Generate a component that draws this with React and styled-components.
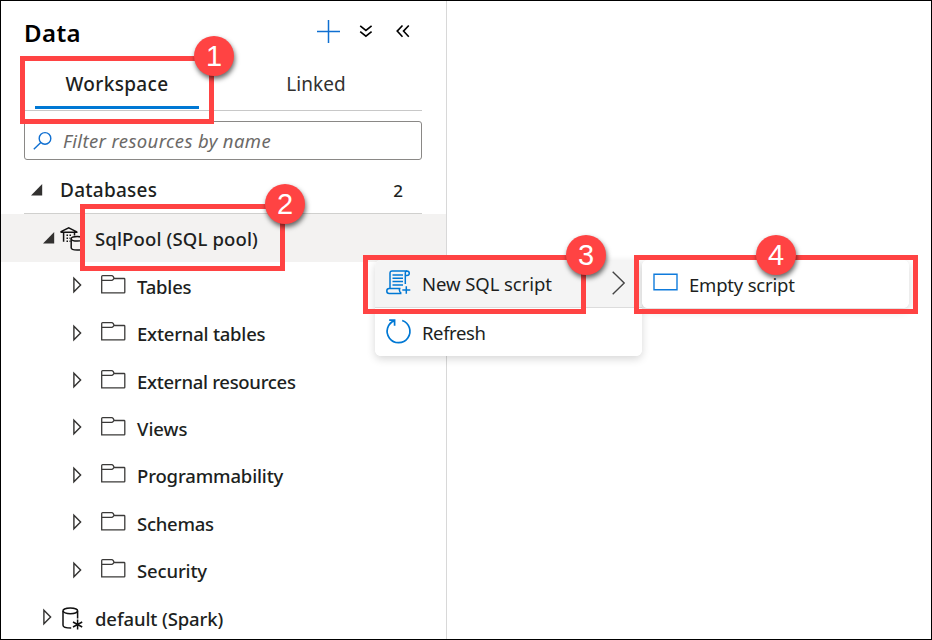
import React from "react";
import styled, { createGlobalStyle } from "styled-components";

const GlobalStyle = createGlobalStyle`
  *, *::before, *::after { box-sizing: border-box; }
  body { margin: 0; font-family: "Noto Sans", "Open Sans", sans-serif; color: #201f1e; background: #fff; }
  svg { display: block; overflow: visible; }
`;

const Window = styled.div`
  position: relative;
  width: 932px;
  height: 640px;
  display: flex;
  border: 1px solid #000;
  background: #fff;
  overflow: hidden;
  white-space: nowrap;
`;

const Panel = styled.aside`
  width: 446px;
  flex: none;
  border-right: 1px solid #d8d8d8;
`;

const Header = styled.header`
  height: 62px;
  display: flex;
  align-items: center;
  padding: 0 35px 0 23px;
`;

const Title = styled.h1`
  margin: 2px auto 0 0;
  font-size: 24px;
  line-height: 32px;
  font-weight: 600;
  letter-spacing: 0.4px;
  color: #000;
`;

const HeaderIcons = styled.div`
  display: flex;
  align-items: center;
  margin: -2px 0 0;
  padding-right: 1px;
`;

const IconButton = styled.span`
  margin-left: ${(p) => p.$ml || 0}px;
`;

const Tabs = styled.nav`
  height: 48px;
  margin: 0 24px 0 23px;
  display: flex;
  border-bottom: 1px solid #c8c8c8;
`;

const Tab = styled.div`
  height: 46px;
  width: 164px;
  margin-left: ${(p) => p.$ml}px;
  padding-top: 8px;
  text-align: center;
  font-size: 19px;
  line-height: 26px;
  font-weight: ${(p) => (p.$active ? 500 : 400)};
  letter-spacing: ${(p) => (p.$active ? 0.35 : 0.1)}px;
  color: ${(p) => (p.$active ? "#201f1e" : "#323130")};
  border-bottom: 3px solid ${(p) => (p.$active ? "#0078d4" : "transparent")};
`;

const Search = styled.div`
  height: 39px;
  margin: 10px 24px 0 23px;
  display: flex;
  align-items: center;
  gap: 11px;
  padding: 0 8px;
  border: 1px solid #8a8886;
  border-radius: 3px;
  color: #6b6967;
  font-size: 18.5px;
  font-style: italic;
  letter-spacing: 0.37px;
`;

const Section = styled.div`
  height: 54px;
  margin: 0 24px 0 23px;
  display: flex;
  align-items: center;
  padding: 7px 19px 0 7px;
  border-bottom: 1px solid #d0d0ce;
  font-size: 19px;
  font-weight: 500;
`;

const SectionName = styled.span`
  margin: -1px auto 0 17px;
  letter-spacing: 0.25px;
`;

const Count = styled.span`
  font-size: 17px;
`;

const Row = styled.div`
  height: ${(p) => (p.$selected ? 48 : 47.42)}px;
  display: flex;
  align-items: center;
  padding-left: ${(p) => (p.$level === 1 ? 42 : 72)}px;
  background: ${(p) => (p.$selected ? "#f3f2f1" : "transparent")};
  font-size: 18.5px;
  font-weight: 500;
`;

const Glyph = styled.span`
  flex: none;
  width: ${(p) => p.$w}px;
  margin-top: ${(p) => p.$dy || 0}px;
`;

const Label = styled.span`
  padding-top: 1px;
  letter-spacing: ${(p) => p.$ls || 0}px;
`;

const Menu = styled.div`
  position: absolute;
  left: ${(p) => p.$x}px;
  top: 259px;
  width: 267px;
  border-radius: 6px;
  background: #fff;
  box-shadow: 0 3px 9px rgba(0, 0, 0, 0.16);
  overflow: hidden;
`;

const MenuItem = styled.div`
  height: 48px;
  display: flex;
  align-items: center;
  padding: 0 17px 2px 11px;
  background: ${(p) => (p.$active ? "#f4f4f4" : "#fff")};
  border-bottom: ${(p) => (p.$active ? "1px solid #dcdcdc" : "0")};
  font-size: 18.5px;
`;

const MenuText = styled.span`
  margin: 2px auto 0 11px;
  letter-spacing: ${(p) => p.$ls || 0}px;
`;

const Frame = styled.div`
  position: absolute;
  left: ${(p) => p.$x}px;
  top: ${(p) => p.$y}px;
  width: ${(p) => p.$w}px;
  height: ${(p) => p.$h}px;
  border: 5px solid #ff4343;
`;

const Badge = styled.div`
  position: absolute;
  left: ${(p) => p.$x}px;
  top: ${(p) => p.$y}px;
  width: 40px;
  height: 40px;
  display: grid;
  place-items: center;
  border-radius: 50%;
  background: #ff4343;
  box-shadow: 1px 3px 5px rgba(0, 0, 0, 0.6);
  color: #fff;
  font: 29px/40px "Liberation Sans", Arial, sans-serif;
`;

const PlusIcon = () => (
  <svg width="23" height="23" fill="none" stroke="#0f6fd1" strokeWidth="1.5">
    <path d="M11.5 0v23M0 11.5h23" />
  </svg>
);

const ChevronsDownIcon = () => (
  <svg width="14" height="14" fill="none" stroke="#000" strokeWidth="1.6">
    <path d="M1.2 1.8l5.7 4.6 5.7-4.6M1.2 7.6l5.7 4.6 5.7-4.6" />
  </svg>
);

const ChevronsLeftIcon = () => (
  <svg width="14" height="14" fill="none" stroke="#000" strokeWidth="1.6">
    <path d="M6.5 1.5L1.2 7.1l5.3 5.6M12.8 1.5L7.5 7.1l5.3 5.6" />
  </svg>
);

const SearchIcon = () => (
  <svg width="19" height="18" fill="none" stroke="#0f6fd1" strokeWidth="1.4">
    <circle cx="12" cy="6.4" r="5.8" />
    <path d="M7.8 10.5L.8 17.2" />
  </svg>
);

const OpenCaret = () => (
  <svg width="12" height="12" fill="#323130">
    <path d="M11.2 0v11.5H0z" />
  </svg>
);

const ClosedCaret = () => (
  <svg width="9" height="16" fill="none" stroke="#323130" strokeWidth="1.4">
    <path d="M.9 1.3v13.4L7.6 8z" />
  </svg>
);

const FolderIcon = () => (
  <svg width="24" height="19" fill="none" stroke="#3b3a39" strokeWidth="1.3">
    <path d="M.7 17.8V1.6Q.7.7 1.6.7h9c1 0 1.3.4 1.7 1l.9 1.8h9.9q.7 0 .7.8v12.9q0 .6-.7.6zM.7 5.3h9.9c1 0 1.3-.4 1.7-1l.7-1" />
  </svg>
);

const PoolIcon = () => (
  <svg width="24" height="24" fill="none" stroke="#111" strokeWidth="1.5">
    <path d="M.5 4.8L8.7.8l8.1 4M.5 5.3h17M3.6 5.5v9.2M14.5 5.5v3" />
    <path d="M6.5 8.2h6M6.5 11.2h4M6.5 14.2h4" strokeWidth="1.5" strokeDasharray="1.5 1.5" />
    <path d="M11.2 12v8.8c0 3 12 3 12 0V12" />
    <ellipse cx="17.2" cy="11.8" rx="6" ry="2.3" />
  </svg>
);

const SparkIcon = () => (
  <svg width="22" height="23" fill="none" stroke="#111" strokeWidth="1.5">
    <ellipse cx="8.3" cy="3.8" rx="7.3" ry="2.9" />
    <path d="M1 4v14.2c0 1.6 3.6 2.8 8.2 2.8M15.6 4v7.5" />
    <path d="M15.6 12.6v9.8M11 15l9.2 5M20.2 15L11 20" strokeWidth="1.5" />
  </svg>
);

const ScriptIcon = () => (
  <svg width="25" height="25" fill="none" stroke="#0078d4" strokeWidth="1.5">
    <path d="M4 18.2V3.2Q4 1 6.2 1h14.6c3.3 0 3.3 4.6 0 4.6h-1.5V14M19.3 5.6V3.2Q19.3 1 21 1" />
    <path d="M14.5 18.4H3.2c-3.2 0-3.2 5 0 5h12.3M14.5 18.4c-1.6 0-1.6 3.3.8 5M20.3 16.2v7.6M16.3 20h8" />
    <path d="M6.5 5h10.5M6.5 8.3h10.5M6.5 11.6h10.5M6.5 14.9h10.5" />
  </svg>
);

const RefreshIcon = () => (
  <svg width="25" height="25" fill="none" stroke="#0078d4" strokeWidth="1.7">
    <path d="M16.2 1.5A11.4 11.4 0 1 1 8.6 1.6M3.2 1.2h5.4v5.6" />
  </svg>
);

const ArrowIcon = () => (
  <svg width="13" height="24" fill="none" stroke="#444" strokeWidth="1.4">
    <path d="M.7.7L12.2 12 .7 23.3" />
  </svg>
);

const ScreenIcon = () => (
  <svg width="25" height="18" fill="none" stroke="#0f7bdc" strokeWidth="1.4">
    <path d="M1 .2h23v15.6H1z" />
  </svg>
);

const folders = [
  { name: "Tables", spacing: -0.2 },
  { name: "External tables", spacing: -0.22 },
  { name: "External resources", spacing: -0.3 },
  { name: "Views", spacing: 0 },
  { name: "Programmability", spacing: -0.15 },
  { name: "Schemas", spacing: -0.25 },
  { name: "Security", spacing: -0.15 },
];

export default function App() {
  return (
    <>
      <GlobalStyle />
      <Window>
        <Panel>
          <Header>
            <Title>Data</Title>
            <HeaderIcons>
              <IconButton><PlusIcon /></IconButton>
              <IconButton $ml={19}><ChevronsDownIcon /></IconButton>
              <IconButton $ml={23}><ChevronsLeftIcon /></IconButton>
            </HeaderIcons>
          </Header>
          <Tabs>
            <Tab $active $ml={11}>Workspace</Tab>
            <Tab $ml={35}>Linked</Tab>
          </Tabs>
          <Search>
            <SearchIcon />
            <span>Filter resources by name</span>
          </Search>
          <Section>
            <OpenCaret />
            <SectionName>Databases</SectionName>
            <Count>2</Count>
          </Section>
          <Row $level={1} $selected>
            <Glyph $w={17}><OpenCaret /></Glyph>
            <Glyph $w={35} $dy={1}><PoolIcon /></Glyph>
            <Label $ls={0.15}>SqlPool (SQL pool)</Label>
          </Row>
          {folders.map(({ name, spacing }) => (
            <Row key={name}>
              <Glyph $w={28} $dy={-1}><ClosedCaret /></Glyph>
              <Glyph $w={36} $dy={-3}><FolderIcon /></Glyph>
              <Label $ls={spacing}>{name}</Label>
            </Row>
          ))}
          <Row $level={1}>
            <Glyph $w={19} $dy={-1}><ClosedCaret /></Glyph>
            <Glyph $w={33} $dy={1}><SparkIcon /></Glyph>
            <Label $ls={-0.1}>default (Spark)</Label>
          </Row>
        </Panel>

        <Menu $x={374}>
          <MenuItem $active>
            <ScriptIcon />
            <MenuText $ls={-0.07}>New SQL script</MenuText>
            <ArrowIcon />
          </MenuItem>
          <MenuItem>
            <RefreshIcon />
            <MenuText $ls={-0.4}>Refresh</MenuText>
          </MenuItem>
        </Menu>
        <Menu $x={641}>
          <MenuItem>
            <ScreenIcon />
            <MenuText $ls={-0.2}>Empty script</MenuText>
          </MenuItem>
        </Menu>

        <Frame $x={19} $y={55} $w={194} $h={68} />
        <Frame $x={79} $y={203} $w={205} $h={67} />
        <Frame $x={362} $y={254} $w={223} $h={59} />
        <Frame $x={633} $y={254} $w={284} $h={59} />
        <Badge $x={193} $y={35}>1</Badge>
        <Badge $x={264} $y={183}>2</Badge>
        <Badge $x={565} $y={234}>3</Badge>
        <Badge $x={755} $y={234}>4</Badge>
      </Window>
    </>
  );
}
